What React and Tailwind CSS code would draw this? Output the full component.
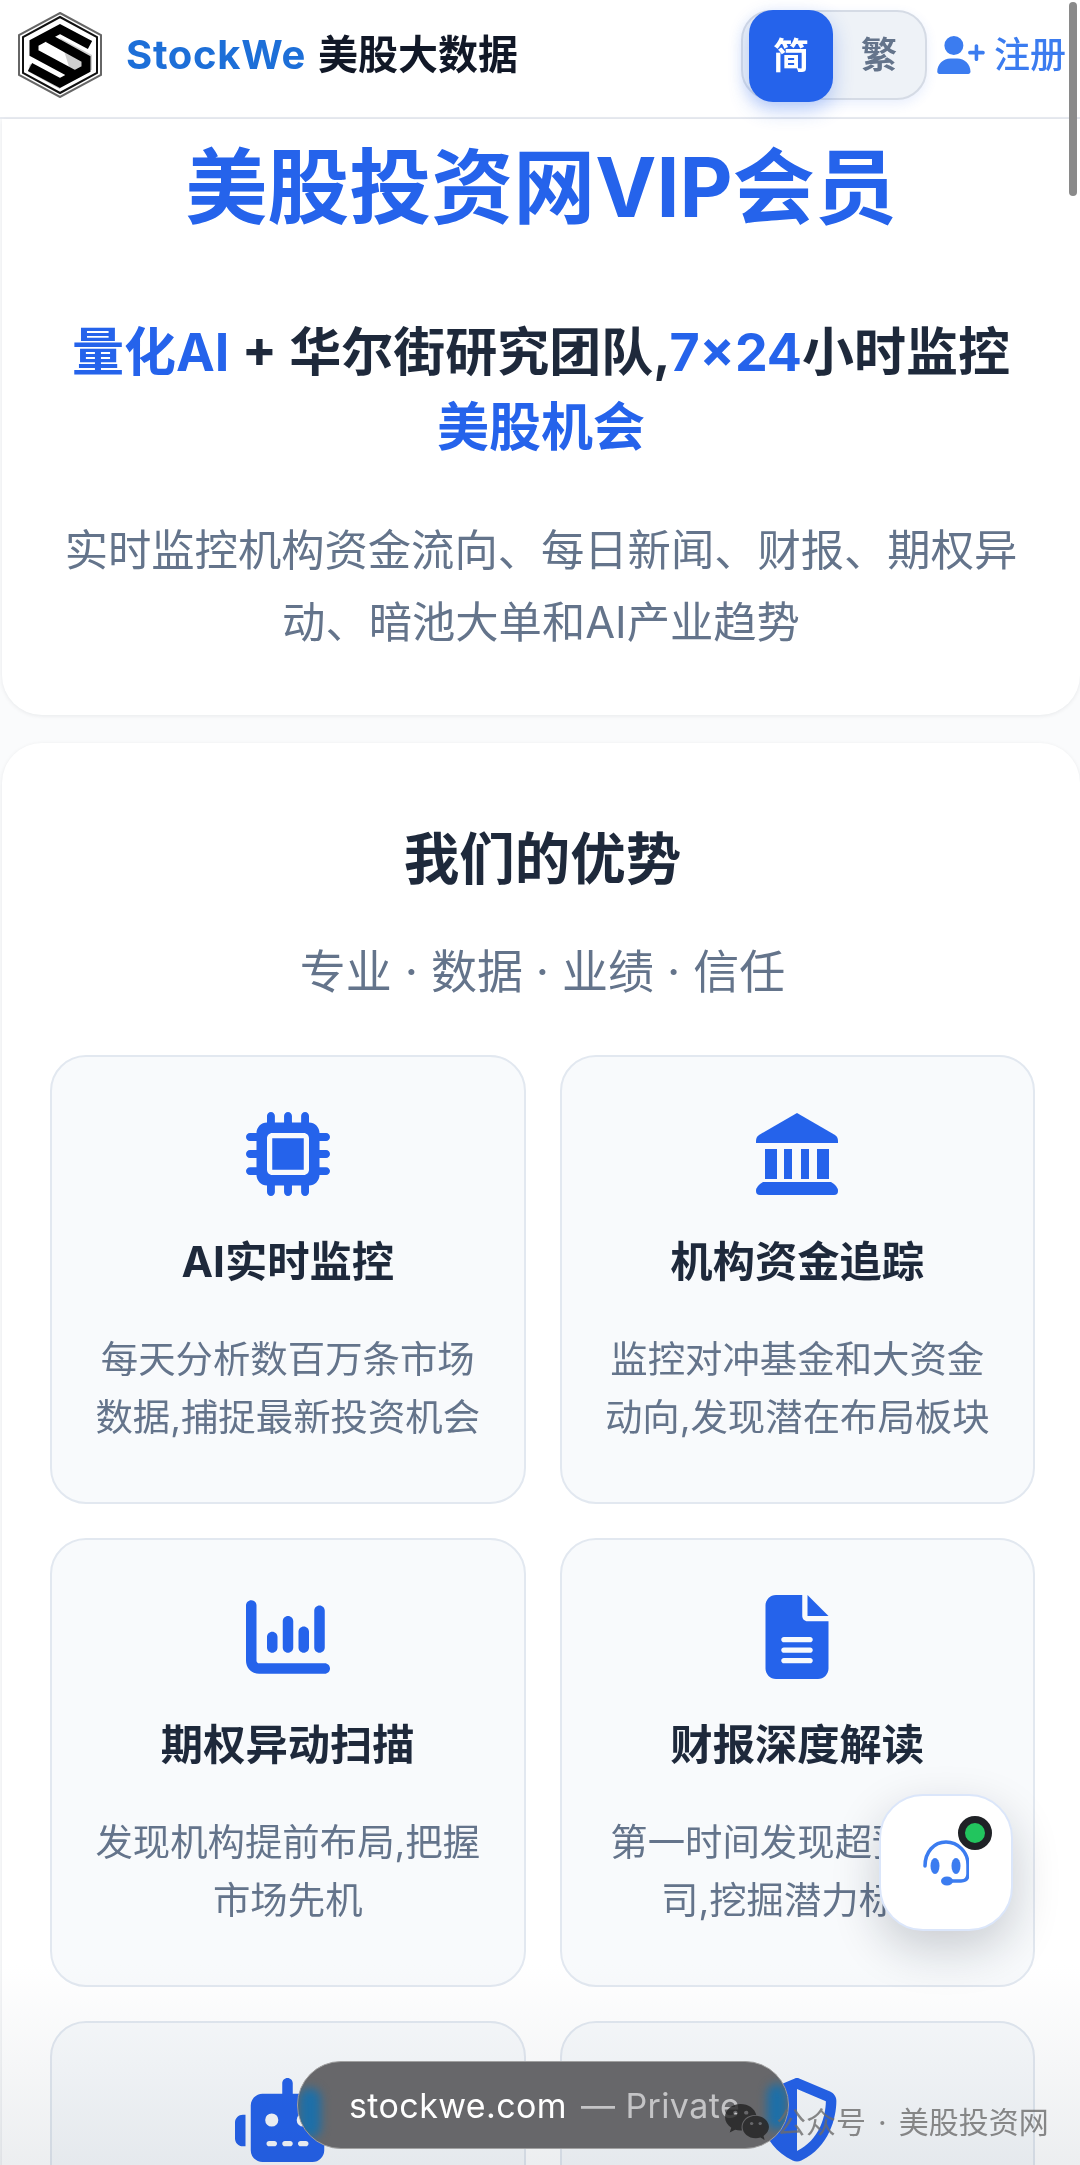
import React from "react";
import {
  FaMicrochip,
  FaChartColumn,
  FaFileLines,
  FaRobot,
  FaShieldHalved,
  FaUserPlus,
  FaWeixin,
} from "react-icons/fa6";

// bank with a plain roof, four columns and a base
const BankIcon = ({ className }) => (
  <svg viewBox="0 0 84 84" fill="currentColor" className={className}>
    <path d="M42 1 L80 23 Q83 25 83 29 L83 31 L1 31 L1 29 Q1 25 4 23 Z" />
    <rect x="10" y="37" width="12" height="30" />
    <rect x="29" y="37" width="8" height="30" />
    <rect x="46" y="37" width="8" height="30" />
    <rect x="62" y="37" width="12" height="30" />
    <path d="M8 70 L76 70 Q83 74 83 79 Q83 83 79 83 L5 83 Q1 83 1 79 Q1 74 8 70 Z" />
  </svg>
);

const features = [
  { icon: FaMicrochip, title: "AI实时监控", desc: "每天分析数百万条市场数据,捕捉最新投资机会" },
  { icon: BankIcon, title: "机构资金追踪", desc: "监控对冲基金和大资金动向,发现潜在布局板块" },
  { icon: FaChartColumn, title: "期权异动扫描", desc: "发现机构提前布局,把握市场先机" },
  { icon: FaFileLines, title: "财报深度解读", desc: "第一时间发现超预期公司,挖掘潜力标的" },
  { icon: FaRobot, title: "", desc: "", wide: true },
  { icon: FaShieldHalved, title: "", desc: "" },
];

// hexagon logo with the folded S
const Logo = () => (
  <svg width="84" height="86" viewBox="0 0 84 86" className="shrink-0">
    <defs>
      <clipPath id="hex-inner">
        <polygon points="42,9 75,27 75,59 42,77 9,59 9,27" />
      </clipPath>
    </defs>
    <polygon points="42,1 83,23 83,63 42,85 1,63 1,23" fill="#fff" stroke="#666" strokeWidth="2" />
    <polygon points="42,5 79,25 79,61 42,81 5,61 5,25" fill="#fff" stroke="#111" strokeWidth="2" />
    <g clipPath="url(#hex-inner)">
      <polygon points="42,26 74,43 74,58 52,58" fill="#cfcfcf" />
      <polygon points="12,52 42,68 42,78 10,60" fill="#bdbdbd" />
      <path d="M72 33 L42 17 L16 31 L16 41 L55 62" fill="none" stroke="#000" strokeWidth="9" />
      <path d="M12 55 L42 71 L68 57 L68 47 L30 26" fill="none" stroke="#000" strokeWidth="9" />
    </g>
  </svg>
);

const Headset = () => (
  <svg width="46" height="46" viewBox="0 0 46 46" fill="none" className="text-[#3b7cf0]">
    <path d="M2 26 C2 12 11 2 23 2 C35 2 45 12 45 25 L45 34 C45 39 42 41 38 41 L24 41" stroke="currentColor" strokeWidth="3.5" strokeLinecap="round" />
    <ellipse cx="12" cy="26" rx="4.5" ry="8" fill="currentColor" />
    <ellipse cx="33" cy="26" rx="4.5" ry="8" fill="currentColor" />
    <ellipse cx="24" cy="41" rx="6" ry="4.5" fill="currentColor" />
  </svg>
);

function FeatureCard({ icon: Icon, title, desc, wide }) {
  return (
    <div className="flex h-[449px] flex-col items-center rounded-[36px] border-2 border-[#e2e8f0] bg-[#f8fafc] px-[40px] pt-[55px] text-center">
      <Icon className={wide ? "h-[84px] w-[105px] shrink-0 text-[#2563eb]" : "h-[84px] w-[84px] shrink-0 text-[#2563eb]"} />
      {title && <h3 className="mt-[37px] text-[42.3px] leading-[58px] font-bold text-[#1e293b]">{title}</h3>}
      {desc && <p className="mt-[40px] text-[37.4px] leading-[58px] text-[#64748b]">{desc}</p>}
    </div>
  );
}

export default function App() {
  return (
    <div className="relative h-[2165px] w-[1080px] overflow-hidden bg-[#fafbfc] font-['Inter','Noto_Sans_CJK_SC',sans-serif]">
      {/* Header */}
      <header className="flex h-[119px] items-center border-b-2 border-[#e8ebf1] bg-white pr-[14px] pb-[8px] pl-[18px]">
        <Logo />
        <div className="ml-[24px] flex flex-1 items-center text-[40px] font-bold whitespace-nowrap">
          <span className="tracking-[0.7px] text-[#1d6fd8]">StockWe</span>
          <span className="ml-[12px] text-[#111827]">美股大数据</span>
        </div>
        <div className="flex h-[90px] w-[186px] rounded-[30px] border-2 border-[#d5dbe5] bg-[#eef2f7] shadow-[0_4px_12px_rgba(37,99,235,0.1)]">
          <div className="ml-[6px] -my-[2px] flex h-[92px] w-[84px] items-center justify-center rounded-[24px] bg-[#2563eb] text-[36px] font-bold text-white shadow-[0_8px_20px_rgba(37,99,235,0.3)]">
            简
          </div>
          <div className="flex flex-1 items-center justify-center text-[36px] font-bold text-[#64748b]">繁</div>
        </div>
        <div className="ml-[10px] flex items-center text-[#3b7cf0]">
          <FaUserPlus className="h-[38px] w-[48px]" />
          <span className="ml-[9px] text-[36px] font-medium whitespace-nowrap">注册</span>
        </div>
      </header>

      {/* Hero */}
      <section className="ml-[2px] rounded-b-[40px] bg-white px-[50px] pt-[21px] pb-[57px] text-center shadow-[0_1px_4px_rgba(15,23,42,0.08)]">
        <h1 className="text-[82px] leading-[96px] font-bold text-[#2563eb]">美股投资网VIP会员</h1>
        <p className="mt-[79px] text-[52px] leading-[75px] font-bold text-[#1e293b]">
          <span className="text-[#2563eb]">量化AI</span> + 华尔街研究团队,<span className="text-[#2563eb]">7×24</span>小时监控
          <span className="text-[#2563eb]">美股机会</span>
        </p>
        <p className="mt-[49px] text-[43.3px] leading-[72px] text-[#64748b]">实时监控机构资金流向、每日新闻、财报、期权异动、暗池大单和AI产业趋势</p>
      </section>

      {/* Advantages */}
      <section className="mt-[28px] ml-[2px] rounded-[40px] bg-white pt-[80px] pr-[45px] pb-[40px] pl-[48px] shadow-[0_1px_4px_rgba(15,23,42,0.08)]">
        <h2 className="text-center text-[55.5px] leading-[72px] font-bold text-[#1e293b]">我们的优势</h2>
        <p className="mt-[46px] text-center text-[46px] leading-[60px] text-[#64748b]">专业 · 数据 · 业绩 · 信任</p>
        <div className="mt-[54px] grid grid-cols-2 gap-[34px]">
          {features.map((f, i) => (
            <FeatureCard key={i} {...f} />
          ))}
        </div>
      </section>

      {/* Fade at the bottom of the capture */}
      <div className="absolute inset-x-0 bottom-0 h-[200px] bg-gradient-to-b from-white to-[#eceef0] mix-blend-multiply" />

      {/* Scrollbar */}
      <div className="absolute top-[2px] right-[3px] h-[194px] w-[8px] rounded-full bg-[#8a8a8a]" />

      {/* Support button */}
      <div className="absolute top-[1794px] left-[879px] flex h-[137px] w-[134px] items-center justify-center rounded-[44px] border-2 border-[#dbe6fa] bg-white shadow-[0_18px_48px_rgba(15,23,42,0.2)]">
        <Headset />
        <div className="absolute top-[20px] right-[19px] h-[34px] w-[34px] rounded-full border-[7px] border-[#1f2226] bg-[#22c55e]" />
      </div>

      {/* Browser url pill */}
      <div className="absolute top-[2061px] left-[297px] flex h-[88px] w-[492px] items-center overflow-hidden rounded-[44px] border border-[#a0a0a0] bg-[#67676a] pl-[51px] text-[34px] tracking-[0.4px] whitespace-nowrap text-white">
        <div className="absolute top-[26px] left-[1px] h-[50px] w-[22px] rounded-full bg-[#1d6fa8] blur-[5px]" />
        <div className="absolute top-[22px] right-[1px] h-[46px] w-[20px] rounded-full bg-[#1d6fa8] blur-[5px]" />
        <span className="relative">stockwe.com</span>
        <span className="relative ml-[14px] text-[#c4c4c6]">— Private</span>
      </div>

      {/* Watermark */}
      <div className="absolute top-[2100px] left-[724px] flex items-center text-[30px] leading-[44px] whitespace-nowrap text-[#6b6b6b]/80">
        <FaWeixin className="mr-[6px] h-[42px] w-[46px] text-[#222]/80" />
        <span>公众号</span>
        <span className="mx-[12px]">·</span>
        <span>美股投资网</span>
      </div>
    </div>
  );
}
